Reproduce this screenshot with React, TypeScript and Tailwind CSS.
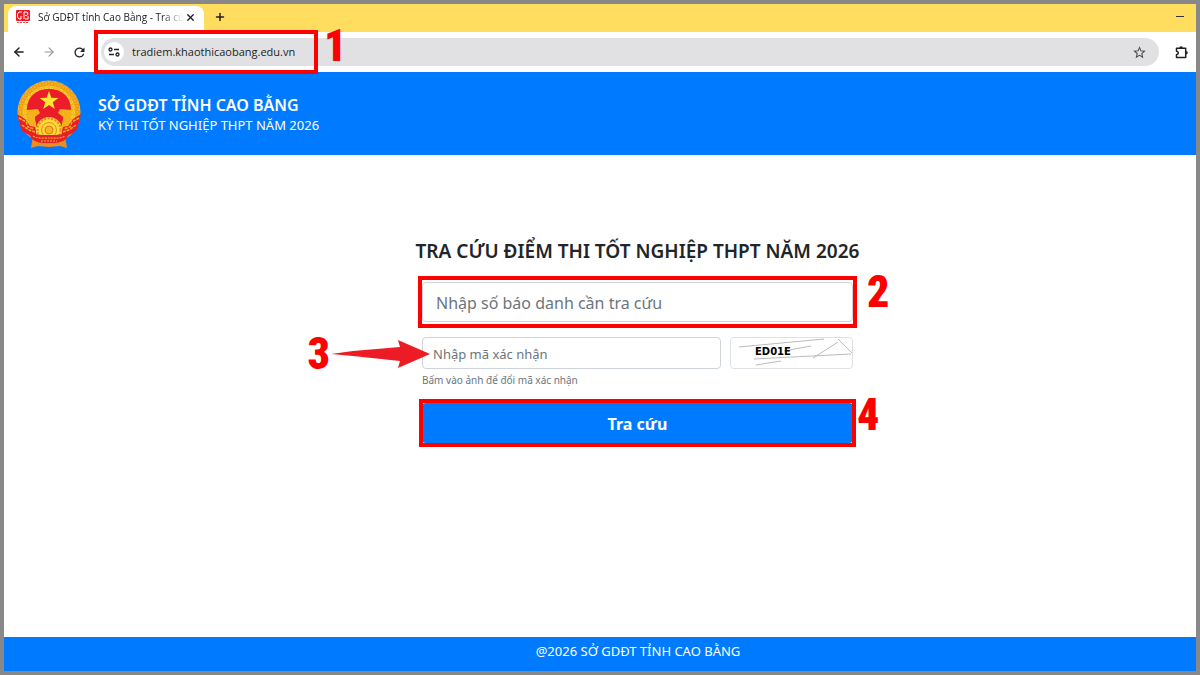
import React, { useState } from "react";
import { ArrowLeft, ArrowRight, Plus, X } from "lucide-react";
import { MdRefresh, MdStarBorder } from "react-icons/md";

const iconBtn = "grid size-5 shrink-0 place-items-center";

const stepBase =
  "pointer-events-none absolute font-['Roboto_Condensed','Open_Sans_Condensed','Roboto',sans-serif] text-[44px] leading-8 font-black text-[#ff0000]";

const frameBase = "pointer-events-none absolute border-4 border-[#ff0000]";

const inputBase =
  "w-full rounded border border-[#ced4da] bg-white text-[#495057] placeholder:text-[#6c757d] focus:outline-none focus:border-[#80bdff]";

const beads = Array.from({ length: 30 }, (_, i) => (i * Math.PI * 2) / 30);

function Emblem() {
  return (
    <svg viewBox="0 0 66 68" className="h-[68px] w-[66px] shrink-0" aria-hidden="true">
      <circle cx="33" cy="32" r="31.500" fill="#f3b21b" />
      {beads.map((a) => (
        <g key={a} fill="none" stroke="#e8871e" strokeWidth="0.8">
          <circle cx={33 + 28.5 * Math.cos(a)} cy={32 + 28.5 * Math.sin(a)} r="2" />
          <circle cx={33 + 24.5 * Math.cos(a)} cy={32 + 24.5 * Math.sin(a)} r="1.4" stroke="#ffdc3c" />
        </g>
      ))}
      <path
        d="M33 9c14 0 22 9 22 21l-11-1-2 4 5 4-2 12H21l-2-12 5-4-2-4-11 1C11 18 19 9 33 9Z"
        fill="#ec1c2b"
      />
      <path d="M19 37c4-3 10-4 14-4s10 1 14 4l-2 12H21Z" fill="#ec1c2b" />
      <path d="m33 11 2.300 6.700 7 .2-5.500 4.300 2 6.800-5.800-4-5.800 4 2-6.800-5.500-4.300 7-.2Z" fill="#ffe632" />
      <path d="m1 34 8 5 5 7 5 1 2 9-3 2-12-7-3-9ZM65 34l-8 5-5 7-5 1-2 9 3 2 12-7 3-9Z" fill="#ec1c2b" />
      <path
        d="m3 38 7 4 2 5 6 2M6 45l7 5 6 2M63 38l-7 4-2 5-6 2M60 45l-7 5-6 2M11 31l5 5M55 31l-5 5M14 38l5 5M52 38l-5 5"
        stroke="#f3b21b"
        strokeWidth="1.500"
        strokeDasharray="3 1"
        fill="none"
      />
      <circle cx="33" cy="50" r="13" fill="#ffd83a" />
      <circle cx="33" cy="50" r="11.500" fill="none" stroke="#e98a1d" strokeWidth="2" strokeDasharray="2 1.500" />
      <circle cx="33" cy="50" r="7.500" fill="none" stroke="#e98a1d" />
      <circle cx="33" cy="50" r="4" fill="#f7b51d" stroke="#e5741c" />
      <path d="m17 56-2 12 7-2 11 1 11-1 7 2-2-12Z" fill="#f08c1e" />
      <path d="M12 50c6 5 12 5 21 5s15 0 21-5l-3 8c-5 5-11 5-18 5s-13 0-18-5Z" fill="#e5202a" />
      <path d="M17 56c5 3 11 2 16 2s11 1 16-2M25 61h16" stroke="#f6b01e" strokeWidth="1.200" strokeDasharray="2 1" fill="none" />
    </svg>
  );
}

function SiteIcon() {
  return (
    <svg viewBox="0 0 14 14" className="mr-2 size-[14px] shrink-0" aria-hidden="true">
      <rect width="14" height="11" rx="1" fill="#f01824" />
      <path d="M6 2H3L1.500 4v3L3 9h2V6M8 2v7M8 2h3l1 2-1 1.500H9M12 6v3H9" stroke="#fff" fill="none" />
      <path d="M1 12.500h12" stroke="#f04048" strokeDasharray="2 1" />
    </svg>
  );
}

function ExtensionIcon() {
  return (
    <svg viewBox="0 0 14 14" className="size-[14px]" aria-hidden="true">
      <path
        d="M1.500 3.300h9.200v9.200H1.500V9.600c2.400-.3 2.400-3.100 0-3.400Z"
        fill="none"
        stroke="#202124"
        strokeWidth="1.500"
        strokeLinejoin="round"
      />
      <path d="M4.300 3a1.800 1.800 0 0 1 3.600 0ZM11 6a1.800 1.800 0 0 1 0 3.600Z" fill="#202124" />
    </svg>
  );
}

function BrowserBar() {
  return (
    <div className="font-['Open_Sans','Noto_Sans',sans-serif] text-[#202124]">
      <div className="flex h-7 items-end bg-[#ffdd5e] pl-1">
        <div className="flex h-[26px] w-[196px] items-center rounded-t-lg bg-white px-2 pb-1">
          <SiteIcon />
          <span className="min-w-0 flex-1 mask-r-from-85% text-[10px] leading-5 whitespace-nowrap">
            Sở GDĐT tỉnh Cao Bằng - Tra cú
          </span>
          <button type="button" aria-label="Đóng thẻ" className="grid size-3 shrink-0 place-items-center">
            <X size={11} strokeWidth={3} />
          </button>
        </div>
        <button type="button" aria-label="Thẻ mới" className="ml-[10px] grid h-[26px] w-3 place-items-center pb-1">
          <Plus size={12} strokeWidth={3} />
        </button>
        <button type="button" aria-label="Thu nhỏ" className="mr-3 ml-auto flex h-8 w-2 items-center">
          <span className="h-px w-2 bg-[#333]" />
        </button>
      </div>

      <div className="flex h-10 items-center gap-[10px] bg-white pr-1 pl-[5px]">
        <button type="button" aria-label="Quay lại" className={iconBtn}>
          <ArrowLeft size={14} strokeWidth={2.5} />
        </button>
        <button type="button" aria-label="Tiến" className={`${iconBtn} text-[#999]`}>
          <ArrowRight size={14} strokeWidth={2} />
        </button>
        <button type="button" aria-label="Tải lại" className={iconBtn}>
          <MdRefresh size={15} />
        </button>
        <div className="relative ml-[2px] flex h-7 min-w-0 flex-1 items-center gap-2 rounded-full bg-[#e1e1e3] pr-3 pl-[3px]">
          <span className="grid size-5 place-items-center rounded-full bg-white">
            <svg viewBox="0 0 12 10" className="h-[10px] w-3" fill="none" stroke="#202124" strokeWidth="1.300">
              <circle cx="2.500" cy="2.500" r="1.500" />
              <path d="M6 2.500h5M1 7.500h5" />
              <circle cx="9.500" cy="7.500" r="1.500" />
            </svg>
          </span>
          <input
            aria-label="Địa chỉ"
            defaultValue="tradiem.khaothicaobang.edu.vn"
            className="min-w-0 flex-1 bg-transparent text-[11px] focus:outline-none"
          />
          <button type="button" aria-label="Đánh dấu trang" className="text-[#444]">
            <MdStarBorder size={15} />
          </button>
          <span className={`${frameBase} -top-2 -left-[7px] h-11 w-56`} />
          <span className={`${stepBase} -top-2 left-[223px]`}>1</span>
        </div>
        <button type="button" aria-label="Tiện ích" className="ml-[3px] grid size-5 place-items-center">
          <ExtensionIcon />
        </button>
      </div>
    </div>
  );
}

function Captcha() {
  return (
    <button
      type="button"
      aria-label="Đổi mã xác nhận"
      className="h-8 w-[123px] shrink-0 overflow-hidden rounded border border-[#dee2e6] bg-white"
    >
      <svg viewBox="0 0 121 30" className="h-full w-full">
        <path
          d="M8 9 93 1M23 21l97-5M25 27l25-4M53 13l27-5M82 20l25-16M107 1l15 15"
          stroke="#bbb"
          fill="none"
        />
        <text x="24" y="17" fill="#000" className="font-['DejaVu_Sans',sans-serif] text-[10px] font-bold">
          ED01E
        </text>
      </svg>
    </button>
  );
}

export default function App() {
  const [sbd, setSbd] = useState("");
  const [code, setCode] = useState("");

  return (
    <div className="flex min-h-screen flex-col border-4 border-[#888] bg-white font-['Noto_Sans','Open_Sans',sans-serif]">
      <BrowserBar />

      <header className="flex h-[83px] items-center gap-4 bg-[#007bff] px-3 pt-px text-white">
        <Emblem />
        <div className="pt-px">
          <h1 className="text-base leading-5 font-semibold">SỞ GDĐT TỈNH CAO BẰNG</h1>
          <p className="text-[13px] leading-5">KỲ THI TỐT NGHIỆP THPT NĂM 2026</p>
        </div>
      </header>

      <main className="flex flex-1 flex-col items-center pt-20 pl-[75px]">
        <h2 className="text-[19px] leading-8 font-semibold whitespace-nowrap text-[#212529]">
          TRA CỨU ĐIỂM THI TỐT NGHIỆP THPT NĂM 2026
        </h2>

        <form className="mt-[15px] w-full max-w-[431px]" onSubmit={(e) => e.preventDefault()}>
          <div className="relative">
            <input
              aria-label="Số báo danh"
              value={sbd}
              onChange={(e) => setSbd(e.target.value)}
              placeholder="Nhập số báo danh cần tra cứu"
              className={`${inputBase} block h-10 px-[13px] pt-[2px] text-base`}
            />
            <span className={`${frameBase} -inset-x-1 -inset-y-[6px]`} />
            <span className={`${stepBase} -top-[6px] left-full ml-[14px]`}>2</span>
          </div>

          <div className="relative mt-[15px] flex gap-[9px]">
            <input
              aria-label="Mã xác nhận"
              value={code}
              onChange={(e) => setCode(e.target.value)}
              placeholder="Nhập mã xác nhận"
              className={`${inputBase} h-8 min-w-0 flex-1 px-[10px] pt-[2px] text-[13px]`}
            />
            <Captcha />
            <span className={`${stepBase} top-px right-full mr-[92px]`}>3</span>
            <svg
              viewBox="0 0 100 28"
              className="pointer-events-none absolute top-[3px] -left-[91px] h-7 w-[100px]"
              aria-hidden="true"
            >
              <path d="M0 14 22 11 69 7 67 0 99 14 67 28 69 21 22 16Z" fill="#ed1c24" />
            </svg>
          </div>
          <p className="mt-[3px] text-[10px] leading-4 text-[#6c757d]">Bấm vào ảnh để đổi mã xác nhận</p>

          <div className="relative mt-[15px]">
            <button
              type="submit"
              className="h-10 w-full rounded-sm bg-[#007bff] pt-[2px] text-base font-bold text-white hover:bg-[#0069d9]"
            >
              Tra cứu
            </button>
            <span className={`${frameBase} -inset-x-[3px] -inset-y-1`} />
            <span className={`${stepBase} -top-1 left-full ml-1`}>4</span>
          </div>
        </form>
      </main>

      <footer className="h-[34px] bg-[#007bff] pt-1 pl-[76px] text-center text-[13px] leading-5 text-white">
        @2026 SỞ GDĐT TỈNH CAO BẰNG
      </footer>
    </div>
  );
}
